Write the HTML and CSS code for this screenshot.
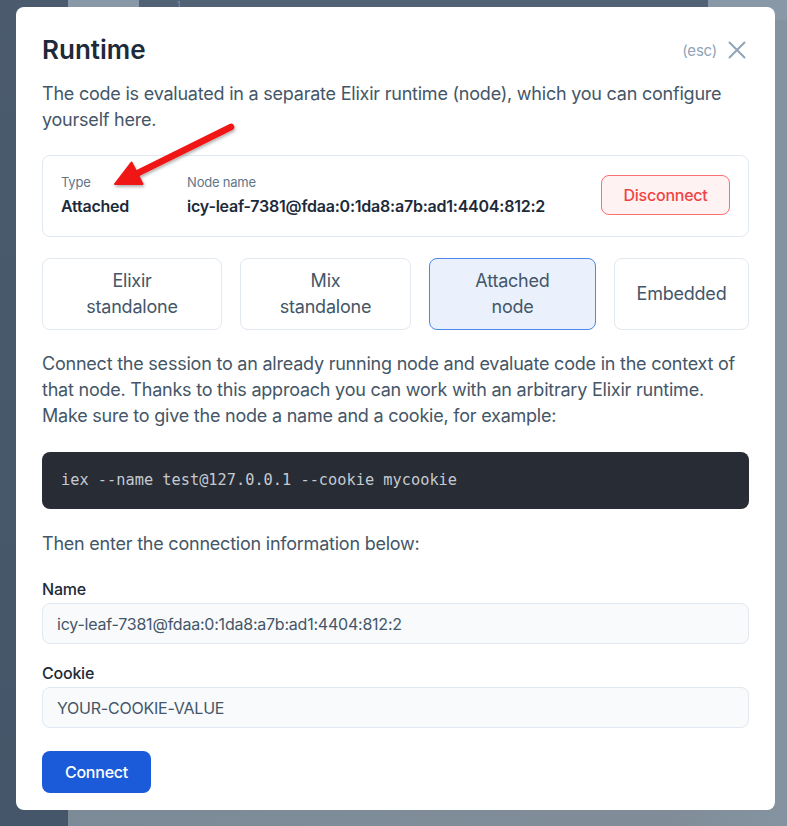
FILE: index.html
```html
<!DOCTYPE html>
<html lang="en">
<head>
<meta charset="utf-8">
<title>Runtime</title>
<link rel="stylesheet" href="styles.css">
</head>
<body>
<div class="backdrop">
  <div class="bd-side"></div>
  <div class="bd-tab"></div>
  <div class="bd-top"><span class="bd-num">1</span></div>
  <div class="bd-tab2"></div>
</div>

<div class="modal">
  <div class="modal-head">
    <h1 class="title">Runtime</h1>
    <div class="close">
      <span class="esc">(esc)</span>
      <svg class="x-icon" width="24" height="24" viewBox="0 0 24 24" aria-hidden="true"><path d="M4.5 4.5 L19.5 19.5 M19.5 4.5 L4.5 19.5" stroke="#91a4b7" stroke-width="2" stroke-linecap="round" fill="none"/></svg>
    </div>
  </div>

  <p class="text intro">The code is evaluated in a separate Elixir runtime (node), which you can configure yourself here.</p>

  <div class="info">
    <div class="info-col">
      <span class="info-label">Type</span>
      <span class="info-value">Attached</span>
    </div>
    <div class="info-col grow">
      <span class="info-label">Node name</span>
      <span class="info-value">icy-leaf-7381@fdaa:0:1da8:a7b:ad1:4404:812:2</span>
    </div>
    <button class="btn-danger">Disconnect</button>
  </div>

  <div class="choices">
    <button class="choice">Elixir<br>standalone</button>
    <button class="choice">Mix<br>standalone</button>
    <button class="choice active">Attached<br>node</button>
    <button class="choice">Embedded</button>
  </div>

  <p class="text desc">Connect the session to an already running node and evaluate code in the context of that node. Thanks to this approach you can work with an arbitrary Elixir runtime. Make sure to give the node a name and a cookie, for example:</p>

  <pre class="code">iex --name test@127.0.0.1 --cookie mycookie</pre>

  <p class="text then">Then enter the connection information below:</p>

  <label class="field">
    <span class="field-label">Name</span>
    <input class="input" type="text" value="icy-leaf-7381@fdaa:0:1da8:a7b:ad1:4404:812:2">
  </label>
  <label class="field second">
    <span class="field-label">Cookie</span>
    <input class="input" type="text" value="YOUR-COOKIE-VALUE">
  </label>

  <button class="btn-primary">Connect</button>
</div>

<svg class="annotation" width="787" height="826" viewBox="0 0 787 826" aria-hidden="true">
  <defs>
    <filter id="sh" x="-20%" y="-20%" width="140%" height="140%">
      <feDropShadow dx="1" dy="2" stdDeviation="1.5" flood-color="#000" flood-opacity="0.3"/>
    </filter>
  </defs>
  <g filter="url(#sh)" fill="#f01414" stroke="#f01414">
    <line x1="231" y1="127" x2="136" y2="174" stroke-width="6.5" stroke-linecap="round"/>
    <polygon points="115,184 131.5,162.5 142.5,184" stroke-width="2" stroke-linejoin="round"/>
  </g>
</svg>
</body>
</html>
```

FILE: styles.css
```css
* { box-sizing: border-box; }

html, body {
  margin: 0;
  padding: 0;
}

body {
  width: 787px;
  height: 826px;
  overflow: hidden;
  position: relative;
  background: linear-gradient(90deg, #7c8a97 0%, #808d99 85%, #8593a0 100%);
  font-family: Inter, "Noto Sans", sans-serif;
  color: #445668;
  letter-spacing: -0.014em;
}

/* dimmed page behind the modal */
.backdrop {
  position: absolute;
  inset: 0;
}
.bd-side {
  position: absolute;
  left: 0; top: 0;
  width: 68px; height: 826px;
  background: linear-gradient(180deg, #4b5b6d 0%, #46566a 100%);
}
.bd-tab {
  position: absolute;
  left: 68px; top: 0;
  width: 71px; height: 20px;
  background: #8898a6;
}
.bd-top {
  position: absolute;
  left: 139px; top: 0;
  width: 569px; height: 20px;
  background: #526275;
}
.bd-num {
  position: absolute;
  left: 38px; top: 0;
  font-size: 8px;
  line-height: 8px;
  color: #8a99a8;
}
.bd-tab2 {
  position: absolute;
  left: 708px; top: 0;
  width: 79px; height: 20px;
  background: #8898a6;
}

.modal {
  position: absolute;
  left: 16px;
  top: 7px;
  width: 759px;
  height: 803px;
  background: #fff;
  border-radius: 8px;
  padding: 25px 26px 0 26px;
  display: flex;
  flex-direction: column;
}

.modal-head {
  display: flex;
  align-items: center;
  justify-content: space-between;
  height: 36px;
}
.title {
  margin: 0;
  font-size: 26px;
  line-height: 36px;
  font-weight: 600;
  letter-spacing: 0;
  color: #1c2a3a;
}
.close {
  display: flex;
  align-items: center;
  gap: 8px;
}
.esc {
  font-size: 15px;
  color: #91a4b7;
}
.x-icon { display: block; }

.text {
  margin: 0;
  font-size: 18px;
  line-height: 26px;
  color: #445668;
}
.intro { margin-top: 13px; }

.info {
  margin-top: 22px;
  border: 1px solid #e1e8f0;
  border-radius: 8px;
  padding: 16px 18px 18px 18px;
  display: flex;
  align-items: center;
  gap: 58px;
}
.info-col {
  display: flex;
  flex-direction: column;
  gap: 2px;
  white-space: nowrap;
}
.info-col.grow { flex: 1; min-width: 0; }
.info-label {
  font-size: 13px;
  line-height: 20px;
  color: #61758a;
}
.info-value {
  font-size: 16px;
  line-height: 24px;
  font-weight: 600;
  color: #1c2a3a;
}
.btn-danger {
  flex: none;
  font-family: inherit;
  letter-spacing: inherit;
  font-size: 16px;
  font-weight: 500;
  color: #ef4444;
  background: #fef2f2;
  border: 1px solid #f87171;
  border-radius: 8px;
  height: 40px;
  width: 129px;
  padding: 0;
}

.choices {
  margin-top: 21px;
  display: grid;
  grid-template-columns: 180px 171px 167px 1fr;
  column-gap: 18px;
}
.choice {
  height: 72px;
  font-family: inherit;
  letter-spacing: inherit;
  font-size: 18px;
  line-height: 26px;
  color: #445668;
  background: #fff;
  border: 1px solid #e1e8f0;
  border-radius: 8px;
  padding: 0 12px;
}
.choice.active {
  background: #eaf1fd;
  border-color: #4a87ef;
}

.desc { margin-top: 21px; }

.code {
  margin: 23px 0 0 0;
  background: #282c34;
  border-radius: 8px;
  padding: 16px 19px;
  font-family: "DejaVu Sans Mono", "Liberation Mono", monospace;
  letter-spacing: 0;
  font-size: 15.3px;
  line-height: 25px;
  color: #c4c9d2;
}

.then { margin-top: 22px; }

.field {
  display: flex;
  flex-direction: column;
  gap: 2px;
  margin-top: 20px;
}
.field.second { margin-top: 17px; }
.field-label {
  font-size: 16px;
  line-height: 24px;
  font-weight: 500;
  color: #1c2a3a;
}
.input {
  height: 41px;
  width: 100%;
  font-family: inherit;
  letter-spacing: inherit;
  font-size: 16px;
  color: #445668;
  background: #f8fafc;
  border: 1px solid #e1e8f0;
  border-radius: 8px;
  padding: 0 14px;
  outline: none;
}

.btn-primary {
  align-self: flex-start;
  margin-top: 23px;
  height: 42px;
  width: 109px;
  font-family: inherit;
  letter-spacing: inherit;
  font-size: 16px;
  font-weight: 500;
  color: #fff;
  background: #1b5bd9;
  border: none;
  border-radius: 8px;
}

.annotation {
  position: absolute;
  left: 0;
  top: 0;
  pointer-events: none;
}
```
